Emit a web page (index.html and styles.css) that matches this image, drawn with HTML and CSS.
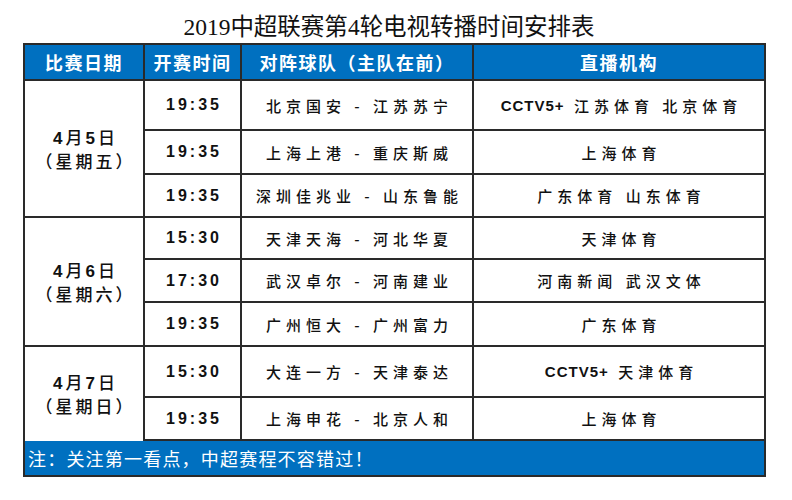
FILE: index.html
```html
<!DOCTYPE html>
<html lang="zh-CN">
<head>
<meta charset="utf-8">
<title>2019中超联赛第4轮电视转播时间安排表</title>
<link rel="stylesheet" href="styles.css">
</head>
<body>
<div class="page">
  <h1 class="title"><span class="num">2019</span>中超联赛第<span class="num">4</span>轮电视转播时间安排表</h1>
  <div class="sheet">
    <div class="head">比赛日期</div>
    <div class="head">开赛时间</div>
    <div class="head">对阵球队（主队在前）</div>
    <div class="head">直播机构</div>

    <div class="date span3"><span class="d"><b>4</b>月<b>5</b>日</span><span class="w">（星期五）</span></div>
    <div class="time">19:35</div><div class="teams">北京国安 - 江苏苏宁</div><div class="tv"><b>CCTV5+</b> 江苏体育 北京体育</div>
    <div class="time">19:35</div><div class="teams">上海上港 - 重庆斯威</div><div class="tv">上海体育</div>
    <div class="time">19:35</div><div class="teams">深圳佳兆业 - 山东鲁能</div><div class="tv">广东体育 山东体育</div>

    <div class="date span3"><span class="d"><b>4</b>月<b>6</b>日</span><span class="w">（星期六）</span></div>
    <div class="time">15:30</div><div class="teams">天津天海 - 河北华夏</div><div class="tv">天津体育</div>
    <div class="time">17:30</div><div class="teams">武汉卓尔 - 河南建业</div><div class="tv">河南新闻 武汉文体</div>
    <div class="time">19:35</div><div class="teams">广州恒大 - 广州富力</div><div class="tv">广东体育</div>

    <div class="date span2 last"><span class="d"><b>4</b>月<b>7</b>日</span><span class="w">（星期日）</span></div>
    <div class="time">15:30</div><div class="teams">大连一方 - 天津泰达</div><div class="tv"><b>CCTV5+</b> 天津体育</div>
    <div class="time">19:35</div><div class="teams">上海申花 - 北京人和</div><div class="tv">上海体育</div>

    <div class="note">注：关注第一看点，中超赛程不容错过！</div>
  </div>
</div>
</body>
</html>
```
FILE: styles.css
```css
html, body {
  margin: 0;
  padding: 0;
  background: #ffffff;
}
body {
  font-family: "Noto Sans CJK SC", "Noto Sans", sans-serif;
  color: #111;
}
.page {
  width: 792px;
  height: 500px;
}
.title {
  margin: 0;
  box-sizing: border-box;
  height: 43px;
  padding-top: 10px;
  padding-right: 14px;
  line-height: 30px;
  font-size: 23.5px;
  font-weight: normal;
  text-align: center;
  color: #111;
}
.title .num {
  font-family: "Liberation Serif", serif;
}
.sheet {
  margin-left: 23px;
  width: 743px;
  box-sizing: border-box;
  display: grid;
  grid-template-columns: 118px 95px 230px 290px;
  grid-template-rows: 34px 48px 42px 41px 40px 41px 42px 49px 41px 34px;
  gap: 2px;
  padding: 2px;
  background: #2a2a2a;
}
.sheet > div {
  background: #fff;
  display: flex;
  align-items: center;
  justify-content: center;
}
.head {
  background: #0070c0 !important;
  color: #fff;
  font-weight: bold;
  font-size: 18px;
  letter-spacing: 1.5px;
}
.date {
  grid-column: 1;
  flex-direction: column;
  font-size: 17px;
  font-weight: 500;
  line-height: 22px;
  letter-spacing: 3px;
  padding-left: 3px;
}
.date b {
  font-family: "Liberation Sans", sans-serif;
  font-size: 17px;
}
.span3 { grid-row: span 3; }
.span2 { grid-row: span 2; }
.date.last {
  margin-bottom: -2px;
}
.time {
  grid-column: 2;
  font-family: "Liberation Sans", sans-serif;
  font-weight: bold;
  font-size: 16px;
  letter-spacing: 3px;
  padding-left: 3px;
}
.teams {
  grid-column: 3;
  font-size: 15px;
  font-weight: 500;
  letter-spacing: 5px;
  white-space: pre;
  padding-left: 5px;
}
.tv {
  grid-column: 4;
  font-size: 15px;
  font-weight: 500;
  letter-spacing: 5px;
  white-space: pre;
  padding-left: 5px;
}
.tv b {
  font-family: "Liberation Sans", sans-serif;
  font-size: 15px;
  letter-spacing: 1px;
  margin-right: 1px;
}
.note {
  grid-column: 1 / -1;
  background: #0070c0 !important;
  color: #fff;
  font-size: 18px;
  letter-spacing: 1.2px;
  justify-content: flex-start !important;
  padding-left: 3px;
}
```
